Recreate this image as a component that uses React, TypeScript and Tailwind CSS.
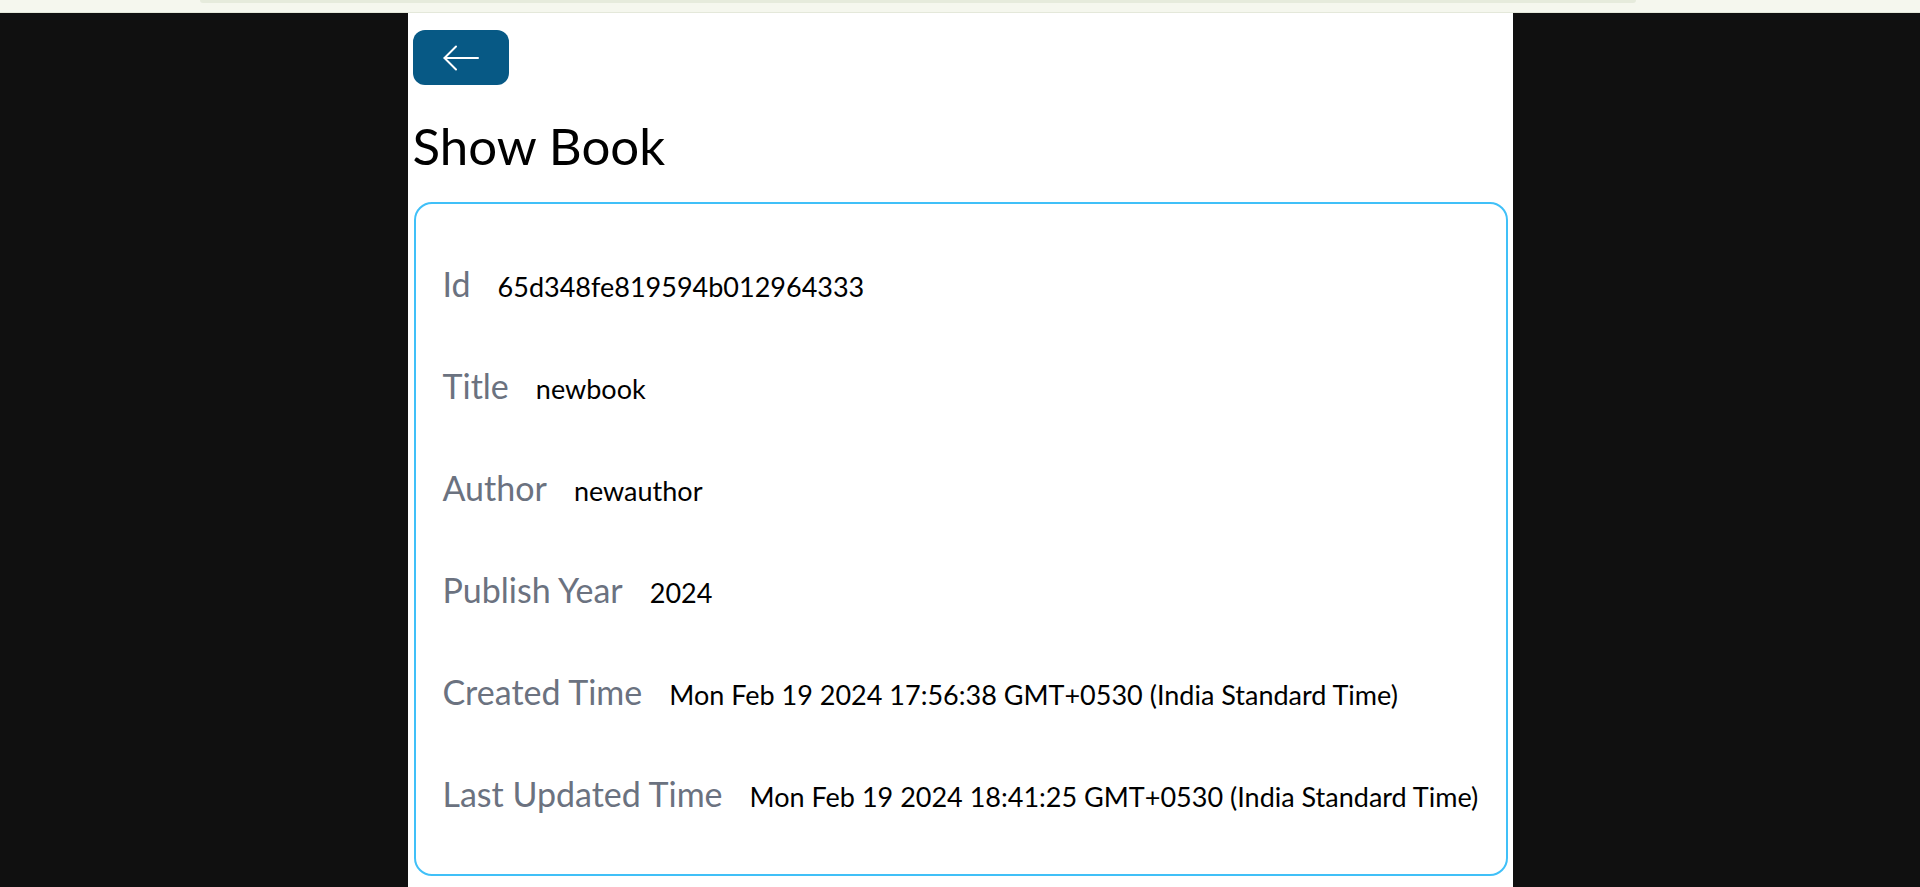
import React from 'react';

interface Field {
  label: string;
  value: string;
}

const book: Field[] = [
  { label: 'Id', value: '65d348fe819594b012964333' },
  { label: 'Title', value: 'newbook' },
  { label: 'Author', value: 'newauthor' },
  { label: 'Publish Year', value: '2024' },
  { label: 'Created Time', value: 'Mon Feb 19 2024 17:56:38 GMT+0530 (India Standard Time)' },
  { label: 'Last Updated Time', value: 'Mon Feb 19 2024 18:41:25 GMT+0530 (India Standard Time)' },
];

const BackArrow = () => (
  <svg width="36" height="26" viewBox="0 0 36 26" fill="none" stroke="white" strokeWidth="2" strokeLinecap="round" strokeLinejoin="round">
    <path d="M35 13H1.5" />
    <path d="M13 1.5L1.5 13L13 24.5" />
  </svg>
);

const App: React.FC = () => {
  return (
    <div className="min-h-screen bg-[#101010] font-['Lato',sans-serif]">
      {/* browser strip */}
      <div className="h-[13px] bg-[#f5f7ee] border-b border-[#e4e8da]">
        <div className="ml-[200px] w-[1436px] h-[3px] bg-[#e6ebdc] rounded-bl-[6px] rounded-br-[6px]" />
      </div>

      <div className="mx-auto w-[1105px] min-h-[874px] bg-white pl-[5px] pr-[4px] pt-[17px]">
        <button className="w-[96px] h-[55px] rounded-[12px] bg-[#075985] flex items-center justify-center">
          <BackArrow />
        </button>

        <h1 className="mt-[35px] text-[51px] leading-none text-black whitespace-nowrap">Show Book</h1>

        <div className="mt-[31px] ml-px w-[1094px] h-[674px] border-2 border-[#40c0f8] rounded-[18px] pl-[27px] pt-[53px]">
          <div className="flex flex-col gap-[48px]">
            {book.map((field) => (
              <div key={field.label} className="flex items-baseline whitespace-nowrap">
                <span className="text-[34px] leading-[54px] text-[#6b7280] mr-[27px]">{field.label}</span>
                <span className="text-[27px] leading-[40px] text-black">{field.value}</span>
              </div>
            ))}
          </div>
        </div>
      </div>
    </div>
  );
};

export default App;
